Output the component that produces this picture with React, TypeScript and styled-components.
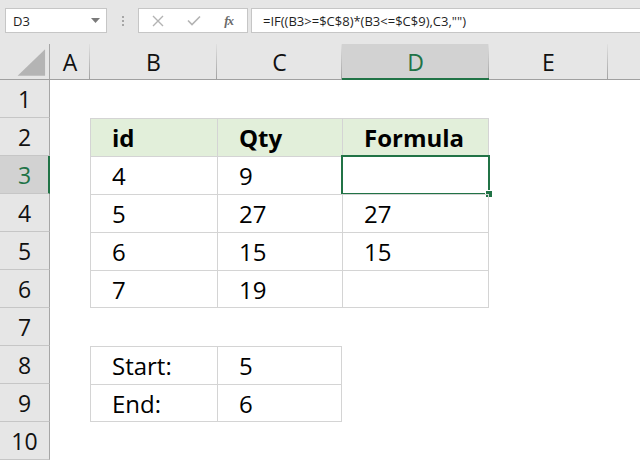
import { FC } from "react"
import styled, { createGlobalStyle, css } from "styled-components"

const GREEN = "#217346"
const HEAD_BG = "#e6e6e6"
const SEL_BG = "#d2d2d2"
const LINE = "#d4d4d4"

const GlobalStyle = createGlobalStyle`
  html, body {
    margin: 0;
    padding: 0;
    background: #ffffff;
    overflow: hidden;
  }
  body {
    font-family: "Open Sans", "Noto Sans", sans-serif;
  }
`

type CellDef = {
  text?: string
  bold?: boolean
  fill?: boolean
  border?: boolean
  right?: boolean
  bottom?: boolean
  selected?: boolean
}

// last column runs off the window, its letter is not in view
const columns = ["A", "B", "C", "D", "E", ""]

// rows 1..10, columns A..F
const rows: CellDef[][] = [
  [{}, {}, {}, {}, {}, {}],
  [
    {},
    { text: "id", bold: true, fill: true, border: true },
    { text: "Qty", bold: true, fill: true, border: true },
    { text: "Formula", bold: true, fill: true, border: true, right: true },
    {},
    {},
  ],
  [{}, { text: "4", border: true }, { text: "9", border: true }, { border: true, right: true, selected: true }, {}, {}],
  [{}, { text: "5", border: true }, { text: "27", border: true }, { text: "27", border: true, right: true }, {}, {}],
  [{}, { text: "6", border: true }, { text: "15", border: true }, { text: "15", border: true, right: true }, {}, {}],
  [
    {},
    { text: "7", border: true, bottom: true },
    { text: "19", border: true, bottom: true },
    { border: true, right: true, bottom: true },
    {},
    {},
  ],
  [{}, {}, {}, {}, {}, {}],
  [{}, { text: "Start:", border: true }, { text: "5", border: true, right: true }, {}, {}, {}],
  [
    {},
    { text: "End:", border: true, bottom: true },
    { text: "6", border: true, right: true, bottom: true },
    {},
    {},
    {},
  ],
  [{}, {}, {}, {}, {}, {}],
]

const SELECTED_COL = "D"
const SELECTED_ROW = 3

export default function App() {
  return (
    <>
      <GlobalStyle />
      <Window>
        <TopBar>
          <NameBox>
            <span>D3</span>
            <DropArrow />
          </NameBox>
          <Grip>
            <i />
            <i />
            <i />
          </Grip>
          <FxButtons>
            <CancelIcon />
            <CheckIcon />
            <FxLabel>fx</FxLabel>
          </FxButtons>
          <FormulaInput>=IF((B3&gt;=$C$8)*(B3&lt;=$C$9),C3,"")</FormulaInput>
        </TopBar>
        <Sheet>
          <Corner>
            <svg width="50" height="36" viewBox="0 0 50 36">
              <polygon points="46,5 46,32 18,32" fill="#b4b4b4" />
            </svg>
          </Corner>
          {columns.map((c, i) => (
            <ColHead key={i} $selected={c === SELECTED_COL}>
              {c}
            </ColHead>
          ))}
          {rows.map((row, ri) => (
            <RowGroup key={ri} row={ri + 1} cells={row} />
          ))}
        </Sheet>
      </Window>
    </>
  )
}

const RowGroup: FC<{ row: number; cells: CellDef[] }> = ({ row, cells }) => (
  <>
    <RowHead $selected={row === SELECTED_ROW}>{row}</RowHead>
    {cells.map((cell, ci) => (
      <Cell
        key={ci}
        $bold={cell.bold}
        $fill={cell.fill}
        $border={cell.border}
        $right={cell.right}
        $bottom={cell.bottom}
      >
        {cell.text}
        {cell.selected && (
          <Selection>
            <FillHandle />
          </Selection>
        )}
      </Cell>
    ))}
  </>
)

const DropArrow: FC = () => (
  <svg width="9" height="5" viewBox="0 0 9 5">
    <polygon points="0,0 9,0 4.5,5" fill="#7a7a7a" />
  </svg>
)

const CancelIcon: FC = () => (
  <svg width="12" height="12" viewBox="0 0 12 12">
    <path d="M1 1 L11 11 M11 1 L1 11" stroke="#b3b3b3" strokeWidth="1.4" fill="none" />
  </svg>
)

const CheckIcon: FC = () => (
  <svg width="14" height="11" viewBox="0 0 14 11">
    <path d="M1 5.5 L5 9.5 L13 1.5" stroke="#b3b3b3" strokeWidth="1.6" fill="none" />
  </svg>
)

const Window = styled.div`
  width: 640px;
  height: 460px;
  display: flex;
  flex-direction: column;
  background: #ffffff;
  overflow: hidden;
`

const TopBar = styled.div`
  height: 44px;
  flex: none;
  box-sizing: border-box;
  display: flex;
  align-items: flex-start;
  padding: 8px 0 0 5px;
  background: ${HEAD_BG};
`

const boxBase = css`
  height: 25px;
  box-sizing: border-box;
  background: #ffffff;
  border: 1px solid #c6c6c6;
  display: flex;
  align-items: center;
`

const NameBox = styled.div`
  ${boxBase};
  width: 102px;
  padding: 0 6px 0 7px;
  justify-content: space-between;
  font-family: "Open Sans", "Noto Sans", sans-serif;
  font-size: 13px;
  color: #1f1f1f;
`

const Grip = styled.div`
  width: 31px;
  height: 25px;
  display: flex;
  flex-direction: column;
  align-items: center;
  justify-content: center;
  gap: 2px;

  i {
    display: block;
    width: 2px;
    height: 2px;
    background: #a6a6a6;
  }
`

const FxButtons = styled.div`
  ${boxBase};
  width: 110px;
  padding: 0 10px 0 13px;
  justify-content: space-between;
`

const FxLabel = styled.span`
  font-family: "Liberation Serif", "DejaVu Serif", serif;
  font-style: italic;
  font-weight: 700;
  font-size: 13px;
  letter-spacing: -1px;
  color: #6a6a6a;
  margin-right: 4px;
`

const FormulaInput = styled.div`
  ${boxBase};
  flex: 1;
  margin-left: 3px;
  border-right: none;
  padding-left: 11px;
  font-family: "Open Sans", "Noto Sans", sans-serif;
  font-size: 13px;
  color: #1f1f1f;
  white-space: nowrap;
`

const Sheet = styled.div`
  flex: 1;
  display: grid;
  grid-template-columns: 50px 40px 127px 125px 147px 119px 120px;
  grid-template-rows: 36px repeat(10, 38px);
  overflow: hidden;
`

const Corner = styled.div`
  background: ${HEAD_BG};
  box-sizing: border-box;
  border-right: 1px solid #a6a6a6;
  border-bottom: 1px solid #a0a0a0;
  display: flex;

  svg {
    display: block;
  }
`

const headText = css`
  font-family: "Open Sans", "Noto Sans", sans-serif;
  font-size: 23px;
  display: flex;
  align-items: center;
  justify-content: center;
  box-sizing: border-box;
`

const ColHead = styled.div<{ $selected?: boolean }>`
  ${headText};
  color: ${(p) => (p.$selected ? GREEN : "#111111")};
  background:
    linear-gradient(to bottom, #e0e0e0, #a2a2a2) right / 1px 100% no-repeat,
    ${(p) => (p.$selected ? SEL_BG : HEAD_BG)};
  border-bottom: ${(p) => (p.$selected ? `2px solid ${GREEN}` : "1px solid #a0a0a0")};
  padding-top: ${(p) => (p.$selected ? "1px" : "0")};
`

const RowHead = styled.div<{ $selected?: boolean }>`
  ${headText};
  color: ${(p) => (p.$selected ? GREEN : "#111111")};
  background: ${(p) => (p.$selected ? SEL_BG : HEAD_BG)};
  border-bottom: 1px solid #c6c6c6;
  border-right: ${(p) => (p.$selected ? `2px solid ${GREEN}` : "1px solid #a6a6a6")};
  padding-left: ${(p) => (p.$selected ? "1px" : "0")};
`

const Cell = styled.div<{
  $bold?: boolean
  $fill?: boolean
  $border?: boolean
  $right?: boolean
  $bottom?: boolean
}>`
  position: relative;
  display: flex;
  align-items: center;
  padding: 1px 0 0 22px;
  box-sizing: border-box;
  font-family: "Open Sans", "Noto Sans", sans-serif;
  font-size: 24px;
  font-weight: ${(p) => (p.$bold ? 700 : 400)};
  color: #000000;
  background: ${(p) => (p.$fill ? "#e2efda" : "transparent")};
  box-shadow: ${(p) =>
    p.$border
      ? [
          `inset 1px 1px 0 ${LINE}`,
          p.$right ? `inset -1px 0 0 ${LINE}` : "",
          p.$bottom ? `inset 0 -1px 0 ${LINE}` : "",
        ]
          .filter(Boolean)
          .join(", ")
      : "none"};
`

const Selection = styled.div`
  position: absolute;
  left: -1px;
  top: -1px;
  right: -1px;
  bottom: -1px;
  border: 2px solid ${GREEN};
  pointer-events: none;
`

const FillHandle = styled.div`
  position: absolute;
  right: -5px;
  bottom: -5px;
  width: 6px;
  height: 6px;
  background: ${GREEN};
  border: 1px solid #ffffff;
`
